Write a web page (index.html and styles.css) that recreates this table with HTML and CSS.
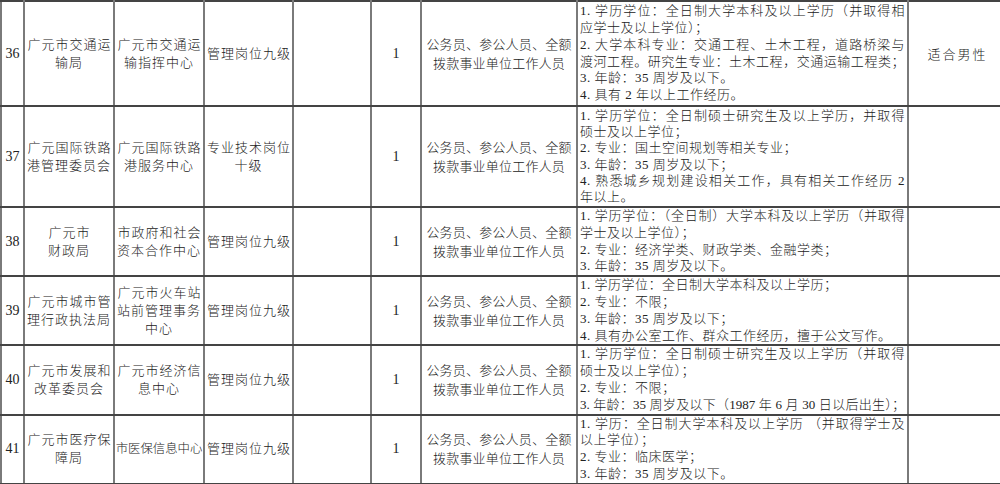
FILE: index.html
```html
<!DOCTYPE html>
<html lang="zh-CN">
<head>
<meta charset="utf-8">
<title>岗位表</title>
<link rel="stylesheet" href="styles.css">
</head>
<body>
<table class="grid">
  <colgroup>
    <col class="c-no"><col class="c-dept"><col class="c-unit"><col class="c-post"><col class="c-blank"><col class="c-num"><col class="c-scope"><col class="c-req"><col class="c-note">
  </colgroup>
  <tbody>
    <tr class="r36">
      <td class="no">36</td>
      <td class="txt">广元市交通运<br>输局</td>
      <td class="txt">广元市交通运<br>输指挥中心</td>
      <td class="txt">管理岗位九级</td>
      <td></td>
      <td class="no">1</td>
      <td class="scope">公务员、参公人员、全额<br>拨款事业单位工作人员</td>
      <td class="req">
        <div class="ln j">1. 学历学位：全日制大学本科及以上学历（并取得相</div>
        <div class="ln">应学士及以上学位）；</div>
        <div class="ln j">2. 大学本科专业：交通工程、土木工程，道路桥梁与</div>
        <div class="ln j">渡河工程。研究生专业：土木工程，交通运输工程类；</div>
        <div class="ln">3. 年龄：35 周岁及以下。</div>
        <div class="ln">4. 具有 2 年以上工作经历。</div>
      </td>
      <td class="note">适合男性</td>
    </tr>
    <tr class="r37">
      <td class="no">37</td>
      <td class="txt">广元国际铁路<br>港管理委员会</td>
      <td class="txt">广元国际铁路<br>港服务中心</td>
      <td class="txt">专业技术岗位<br>十级</td>
      <td></td>
      <td class="no">1</td>
      <td class="scope">公务员、参公人员、全额<br>拨款事业单位工作人员</td>
      <td class="req">
        <div class="ln j">1. 学历学位：全日制硕士研究生及以上学历，并取得</div>
        <div class="ln">硕士及以上学位；</div>
        <div class="ln">2. 专业：国土空间规划等相关专业；</div>
        <div class="ln">3. 年龄：35 周岁及以下；</div>
        <div class="ln j">4. 熟悉城乡规划建设相关工作，具有相关工作经历 2</div>
        <div class="ln">年以上。</div>
      </td>
      <td class="note"></td>
    </tr>
    <tr class="r38">
      <td class="no">38</td>
      <td class="txt">广元市<br>财政局</td>
      <td class="txt">市政府和社会<br>资本合作中心</td>
      <td class="txt">管理岗位九级</td>
      <td></td>
      <td class="no">1</td>
      <td class="scope">公务员、参公人员、全额<br>拨款事业单位工作人员</td>
      <td class="req">
        <div class="ln j">1. 学历学位：（全日制）大学本科及以上学历（并取得</div>
        <div class="ln">学士及以上学位）；</div>
        <div class="ln">2. 专业：经济学类、财政学类、金融学类；</div>
        <div class="ln">3. 年龄：35 周岁及以下。</div>
      </td>
      <td class="note"></td>
    </tr>
    <tr class="r39">
      <td class="no">39</td>
      <td class="txt">广元市城市管<br>理行政执法局</td>
      <td class="txt">广元市火车站<br>站前管理事务<br>中心</td>
      <td class="txt">管理岗位九级</td>
      <td></td>
      <td class="no">1</td>
      <td class="scope">公务员、参公人员、全额<br>拨款事业单位工作人员</td>
      <td class="req">
        <div class="ln">1. 学历学位：全日制大学本科及以上学历；</div>
        <div class="ln">2. 专业：不限；</div>
        <div class="ln">3. 年龄：35 周岁及以下；</div>
        <div class="ln">4. 具有办公室工作、群众工作经历，擅于公文写作。</div>
      </td>
      <td class="note"></td>
    </tr>
    <tr class="r40">
      <td class="no">40</td>
      <td class="txt">广元市发展和<br>改革委员会</td>
      <td class="txt">广元市经济信<br>息中心</td>
      <td class="txt">管理岗位九级</td>
      <td></td>
      <td class="no">1</td>
      <td class="scope">公务员、参公人员、全额<br>拨款事业单位工作人员</td>
      <td class="req">
        <div class="ln j">1. 学历学位：全日制硕士研究生及以上学历（并取得</div>
        <div class="ln">硕士及以上学位）；</div>
        <div class="ln">2. 专业：不限；</div>
        <div class="ln j tight">3. 年龄：35 周岁及以下（1987 年 6 月 30 日以后出生）；</div>
      </td>
      <td class="note"></td>
    </tr>
    <tr class="r41">
      <td class="no">41</td>
      <td class="txt">广元市医疗保<br>障局</td>
      <td class="txt narrow">市医保信息中心</td>
      <td class="txt">管理岗位九级</td>
      <td></td>
      <td class="no">1</td>
      <td class="scope">公务员、参公人员、全额<br>拨款事业单位工作人员</td>
      <td class="req">
        <div class="ln j">1. 学历：全日制大学本科及以上学历 （并取得学士及</div>
        <div class="ln">以上学位）；</div>
        <div class="ln">2. 专业：临床医学；</div>
        <div class="ln">3. 年龄：35 周岁及以下。</div>
      </td>
      <td class="note"></td>
    </tr>
  </tbody>
</table>
</body>
</html>
```

FILE: styles.css
```css
html, body {
  margin: 0;
  padding: 0;
  background: #ffffff;
  overflow: hidden;
}

body {
  width: 1000px;
  height: 484px;
  font-family: "Liberation Serif", "Noto Sans CJK SC", serif;
  font-size: 13px;
  font-weight: 300;
  color: #222222;
}

.grid {
  border-collapse: collapse;
  table-layout: fixed;
  width: 1004px;
  margin: 0;
}

.c-no { width: 23px; }
.c-dept { width: 90px; }
.c-unit { width: 90px; }
.c-post { width: 89px; }
.c-blank { width: 78px; }
.c-num { width: 50px; }
.c-scope { width: 156px; }
.c-req { width: 331px; }
.c-note { width: 97px; }

.grid td {
  padding: 0;
  border-left: 2px solid #7a7a7a;
  border-right: 2px solid #7a7a7a;
  border-top: 2px solid #444444;
  border-bottom: 2px solid #444444;
  vertical-align: middle;
  text-align: center;
  overflow: hidden;
}

.r36 { height: 105px; }
.r37 { height: 101px; }
.r38 { height: 69px; }
.r39 { height: 69px; }
.r40 { height: 68px; }
.r41 { height: 69px; }

.grid .no {
  font-size: 14px;
  line-height: 18px;
}

.grid .txt {
  line-height: 18px;
  letter-spacing: 1px;
  text-indent: 1px;
}

.grid .txt.narrow {
  font-size: 12.4px;
  letter-spacing: 0;
  text-indent: 0;
}

.grid .scope {
  line-height: 19px;
  letter-spacing: 0.2px;
}

.grid .req {
  text-align: left;
  padding: 0 2px;
}

.ln {
  line-height: 16.8px;
  letter-spacing: 0.5px;
  white-space: nowrap;
  text-align: left;
}

.r37 .ln {
  line-height: 16.3px;
}

.ln.j {
  text-align: justify;
  text-align-last: justify;
  white-space: normal;
}

.ln.tight {
  letter-spacing: 0;
}

.grid .note {
  letter-spacing: 2px;
  text-indent: 2px;
  font-size: 13px;
}
```
